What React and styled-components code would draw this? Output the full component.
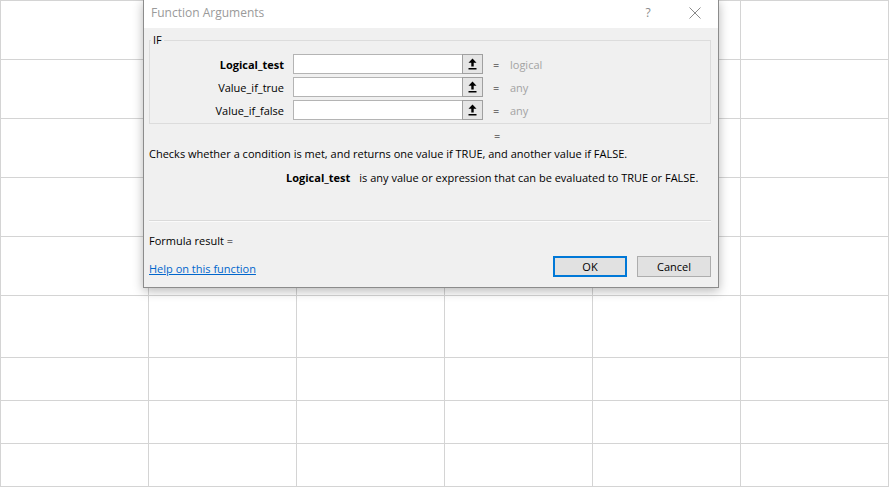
import React from 'react';
import styled, { createGlobalStyle } from 'styled-components';

const GlobalStyle = createGlobalStyle`
  html, body {
    margin: 0;
    padding: 0;
    background: #fff;
  }
  body {
    font-family: "Segoe UI", "Open Sans", "Liberation Sans", sans-serif;
    font-size: 11px;
    color: #000;
  }
`;

const Sheet = styled.div`
  position: relative;
  width: 889px;
  height: 487px;
  overflow: hidden;
`;

const Grid = styled.div`
  display: grid;
  grid-template-columns: repeat(6, 148px);
  grid-template-rows: repeat(5, 59px) 62px repeat(3, 43px);
  border-top: 1px solid #d4d4d4;
  border-left: 1px solid #d4d4d4;
  width: max-content;
`;

const Cell = styled.div`
  border-right: 1px solid #d4d4d4;
  border-bottom: 1px solid #d4d4d4;
  margin: -1px 0 0 -1px;
`;

const Dialog = styled.div`
  position: absolute;
  left: 143px;
  top: -1px;
  width: 574px;
  height: 287px;
  background: #f0f0f0;
  border: 1px solid #8c8c8c;
  box-shadow: 0 3px 10px rgba(0, 0, 0, 0.28);
  display: flex;
  flex-direction: column;
`;

const TitleBar = styled.div`
  height: 28px;
  background: #fff;
  display: flex;
  align-items: center;
  padding: 0 0 3px 7px;
  box-sizing: border-box;
  color: #9a9a9a;
  font-size: 12px;
`;

const Title = styled.span`
  flex: 1;
`;

const TitleButton = styled.span`
  width: ${p => p.$w}px;
  display: flex;
  justify-content: center;
  color: #8a8a8a;
  font-size: 12px;
`;

const Body = styled.div`
  flex: 1;
  display: flex;
  flex-direction: column;
  padding: 0 7px 0 5px;
`;

const GroupBox = styled.fieldset`
  margin: 5px 0 0 0;
  padding: 7px 0 3px 0;
  border: 1px solid #dcdcdc;
  display: flex;
  flex-direction: column;
  gap: 3px;
  min-width: 0;
`;

const Legend = styled.legend`
  padding: 0 2px;
  margin-left: 1px;
  font-size: 11px;
  line-height: 14px;
`;

const ArgRow = styled.div`
  display: flex;
  align-items: center;
  height: 20px;
`;

const ArgLabel = styled.label`
  width: 134px;
  text-align: right;
  font-weight: ${p => (p.$bold ? 700 : 400)};
  margin-right: 9px;
`;

const ArgInput = styled.div`
  width: 168px;
  height: 18px;
  background: #fff;
  border: 1px solid #b4b4b4;
  border-right: none;
`;

const RefButton = styled.div`
  width: 19px;
  height: 18px;
  border: 1px solid #a0a0a0;
  background: #e5e5e5;
  display: flex;
  align-items: center;
  justify-content: center;
`;

const Equals = styled.span`
  margin-left: 10px;
  width: 6px;
  text-align: center;
`;

const ArgType = styled.span`
  margin-left: 11px;
  color: #a3a3a3;
`;

const ResultEquals = styled.div`
  margin: 5px 0 0 345px;
  height: 13px;
  line-height: 13px;
`;

const Description = styled.div`
  margin-top: 4px;
  line-height: 16px;
  white-space: nowrap;
`;

const ArgHelp = styled.div`
  margin: 8px 0 0 137px;
  line-height: 16px;
  white-space: nowrap;
  display: flex;
  gap: 9px;
`;

const Strong = styled.b`
  font-weight: 700;
`;

const Separator = styled.hr`
  margin: 34px 0 0 0;
  border: none;
  border-top: 1px solid #dadada;
  border-bottom: 1px solid #fafafa;
`;

const FormulaResult = styled.div`
  margin-top: 11px;
  line-height: 16px;
`;

const Footer = styled.div`
  display: flex;
  align-items: center;
  margin-top: 7px;
`;

const HelpLink = styled.a`
  color: #0066cc;
  text-decoration: underline;
  flex: 1;
  cursor: pointer;
  padding-top: 3px;
`;

const Button = styled.button`
  width: 74px;
  height: 21px;
  margin-left: ${p => p.$gap}px;
  font: inherit;
  color: #000;
  background: #e1e1e1;
  border: ${p => (p.$primary ? '2px solid #0078d7' : '1px solid #adadad')};
  padding: 0;
`;

function RefIcon() {
  return (
    <svg width="9" height="12" viewBox="0 0 9 12">
      <path d="M4.5 0.5 L8.5 4.8 L5.7 4.8 L5.7 8.6 L3.3 8.6 L3.3 4.8 L0.5 4.8 Z" fill="#000" />
      <rect x="0.5" y="10" width="8" height="1.5" fill="#000" />
    </svg>
  );
}

function CloseIcon() {
  return (
    <svg width="12" height="12" viewBox="0 0 12 12">
      <path d="M0.5 0.5 L11.5 11.5 M11.5 0.5 L0.5 11.5" stroke="#8a8a8a" strokeWidth="1" fill="none" />
    </svg>
  );
}

const args = [
  { name: 'Logical_test', type: 'logical', bold: true },
  { name: 'Value_if_true', type: 'any' },
  { name: 'Value_if_false', type: 'any' },
];

export default function App() {
  const cells = Array.from({ length: 54 });
  return (
    <Sheet>
      <GlobalStyle />
      <Grid>
        {cells.map((_, i) => (
          <Cell key={i} />
        ))}
      </Grid>

      <Dialog>
        <TitleBar>
          <Title>Function Arguments</Title>
          <TitleButton $w={48}>?</TitleButton>
          <TitleButton $w={46}>
            <CloseIcon />
          </TitleButton>
        </TitleBar>
        <Body>
          <GroupBox>
            <Legend>IF</Legend>
            {args.map(a => (
              <ArgRow key={a.name}>
                <ArgLabel $bold={a.bold}>{a.name}</ArgLabel>
                <ArgInput />
                <RefButton>
                  <RefIcon />
                </RefButton>
                <Equals>=</Equals>
                <ArgType>{a.type}</ArgType>
              </ArgRow>
            ))}
          </GroupBox>
          <ResultEquals>=</ResultEquals>
          <Description>
            Checks whether a condition is met, and returns one value if TRUE, and another value if FALSE.
          </Description>
          <ArgHelp>
            <Strong>Logical_test</Strong>
            <span>is any value or expression that can be evaluated to TRUE or FALSE.</span>
          </ArgHelp>
          <Separator />
          <FormulaResult>Formula result =</FormulaResult>
          <Footer>
            <HelpLink>Help on this function</HelpLink>
            <Button $primary $gap={0}>OK</Button>
            <Button $gap={10}>Cancel</Button>
          </Footer>
        </Body>
      </Dialog>
    </Sheet>
  );
}
